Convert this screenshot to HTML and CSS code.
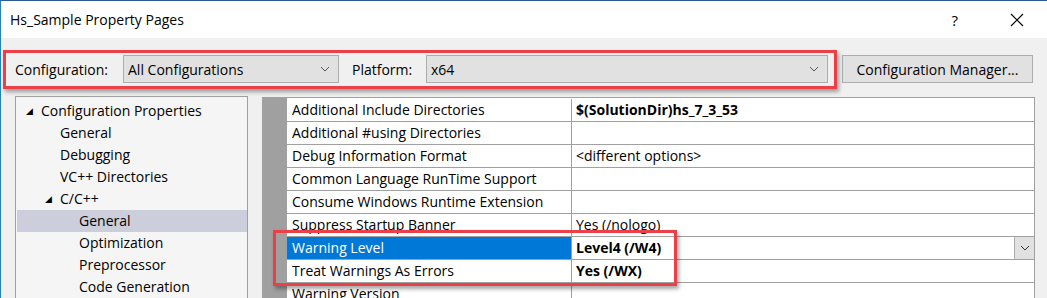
FILE: index.html
```html
<!doctype html>
<html lang="en">
  <head>
    <meta charset="UTF-8" />
    <title>Hs_Sample Property Pages</title>
    <link rel="stylesheet" href="styles.css">
  </head>
  <body>
    <div class="window">
      <!-- Title bar -->
      <div class="titlebar">
        <span class="title">Hs_Sample Property Pages</span>
        <span class="help">?</span>
        <svg class="close" width="14" height="14" viewBox="0 0 14 14">
          <path d="M1 1 L13 13 M13 1 L1 13" stroke="#000" stroke-width="1.2" fill="none" />
        </svg>
      </div>

      <!-- Configuration / Platform row -->
      <div class="toolbar">
        <span class="label config-label">Configuration:</span>
        <div class="combo combo-config">
          <span>All Configurations</span>
          <svg class="chevron" width="10" height="6" viewBox="0 0 10 6">
            <path d="M1 1 L5 5 L9 1" stroke="#555" stroke-width="1" fill="none" />
          </svg>
        </div>
        <span class="label platform-label">Platform:</span>
        <div class="combo combo-platform">
          <span>x64</span>
          <svg class="chevron" width="10" height="6" viewBox="0 0 10 6">
            <path d="M1 1 L5 5 L9 1" stroke="#555" stroke-width="1" fill="none" />
          </svg>
        </div>
        <button class="manager">Configuration Manager...</button>
        <div class="highlight highlight-top"></div>
      </div>

      <div class="main">
        <!-- Property tree -->
        <ul class="tree">
          <li class="lvl0"><span class="arrow">&#9698;</span>Configuration Properties</li>
          <li class="lvl1">General</li>
          <li class="lvl1">Debugging</li>
          <li class="lvl1">VC++ Directories</li>
          <li class="lvl1 open"><span class="arrow">&#9698;</span>C/C++</li>
          <li class="lvl2 selected">General</li>
          <li class="lvl2">Optimization</li>
          <li class="lvl2">Preprocessor</li>
          <li class="lvl2">Code Generation</li>
        </ul>

        <!-- Property grid -->
        <div class="grid-area">
          <div class="gutter"></div>
          <div class="grid">
            <div class="row">
              <div class="name">Additional Include Directories</div>
              <div class="value bold">$(SolutionDir)hs_7_3_53</div>
            </div>
            <div class="row">
              <div class="name">Additional #using Directories</div>
              <div class="value"></div>
            </div>
            <div class="row">
              <div class="name">Debug Information Format</div>
              <div class="value">&lt;different options&gt;</div>
            </div>
            <div class="row">
              <div class="name">Common Language RunTime Support</div>
              <div class="value"></div>
            </div>
            <div class="row">
              <div class="name">Consume Windows Runtime Extension</div>
              <div class="value"></div>
            </div>
            <div class="row">
              <div class="name">Suppress Startup Banner</div>
              <div class="value">Yes (/nologo)</div>
            </div>
            <div class="row active">
              <div class="name">Warning Level</div>
              <div class="value bold">
                <span>Level4 (/W4)</span>
                <span class="drop">
                  <svg width="10" height="6" viewBox="0 0 10 6">
                    <path d="M1 1 L5 5 L9 1" stroke="#333" stroke-width="1" fill="none" />
                  </svg>
                </span>
              </div>
            </div>
            <div class="row">
              <div class="name">Treat Warnings As Errors</div>
              <div class="value bold">Yes (/WX)</div>
            </div>
            <div class="row">
              <div class="name">Warning Version</div>
              <div class="value"></div>
            </div>
          </div>
          <div class="highlight highlight-grid"></div>
        </div>
      </div>
    </div>
  </body>
</html>
```

FILE: styles.css
```css
/* Visual Studio property pages dialog */
body {
  margin: 0;
  width: 1047px;
  height: 298px;
  overflow: hidden;
  font-family: "Segoe UI", "Open Sans", sans-serif;
  font-size: 14px;
  color: #000;
  background-color: #f0f0f0;
}

.window {
  height: 298px;
  border-top: 1px solid #2c5a92;
  border-left: 1px solid #1883d7;
  box-sizing: border-box;
  background-color: #f0f0f0;
}

.titlebar {
  height: 37px;
  background-color: #fff;
  display: flex;
  align-items: center;
  padding-left: 9px;
}

.title {
  flex: 1;
  font-size: 14px;
  padding-bottom: 1px;
}

.help {
  font-size: 15px;
  margin-right: 52px;
}

.close {
  margin-right: 23px;
}

.toolbar {
  position: relative;
  display: flex;
  align-items: center;
  height: 28px;
  margin-top: 17px;
}

.label {
  white-space: nowrap;
}

.config-label {
  margin-left: 14px;
  width: 108px;
}

.platform-label {
  margin-left: 13px;
  width: 74px;
}

.combo {
  height: 28px;
  box-sizing: border-box;
  border: 1px solid #adadad;
  background-color: #e1e1e1;
  display: flex;
  align-items: center;
  justify-content: space-between;
  padding: 0 8px 0 4px;
}

.combo-config {
  width: 216px;
}

.combo-platform {
  width: 402px;
}

.manager {
  margin-left: 14px;
  width: 191px;
  height: 28px;
  border: 1px solid #adadad;
  background-color: #e1e1e1;
  font-family: inherit;
  font-size: 14px;
  padding: 0;
}

/* Red annotation boxes drawn over the dialog */
.highlight {
  position: absolute;
  border: 3px solid #ec3f47;
  box-shadow: 2px 3px 4px rgba(0, 0, 0, 0.35);
  pointer-events: none;
}

.highlight-top {
  left: 2px;
  top: -5px;
  width: 828px;
  height: 33px;
}

.highlight-grid {
  left: 11px;
  top: 134px;
  width: 398px;
  height: 50px;
}

.main {
  display: flex;
  margin-top: 13px;
}

.tree {
  list-style: none;
  margin: 0 0 0 14px;
  padding: 3px 0 0 1px;
  width: 230px;
  height: 220px;
  background-color: #f5f5f5;
  border: 1px solid #a0a0a0;
  border-bottom: none;
}

.tree li {
  height: 22px;
  line-height: 22px;
  white-space: nowrap;
  position: relative;
}

.arrow {
  position: absolute;
  font-size: 9px;
}

.lvl0 {
  padding-left: 24px;
}

.lvl0 .arrow {
  left: 9px;
}

.lvl1 {
  padding-left: 43px;
}

.lvl1.open .arrow {
  left: 28px;
}

.lvl2 {
  padding-left: 62px;
}

.selected {
  background-color: #cccedb;
}

.grid-area {
  position: relative;
  display: flex;
  margin-left: 14px;
  padding-top: 1px;
}

.gutter {
  width: 25px;
  background-color: #a0a0a0;
}

.grid {
  width: 747px;
  background-color: #fff;
  border-top: 1px solid #a0a0a0;
  border-right: 1px solid #a0a0a0;
  padding-top: 1px;
}

.row {
  display: flex;
  height: 23px;
  border-bottom: 1px solid #a0a0a0;
  box-sizing: border-box;
}

.name {
  width: 285px;
  padding-left: 5px;
  border-right: 1px solid #a0a0a0;
  box-sizing: border-box;
  line-height: 22px;
  white-space: nowrap;
}

.value {
  flex: 1;
  padding-left: 4px;
  line-height: 22px;
  display: flex;
  justify-content: space-between;
  white-space: nowrap;
}

.bold {
  font-weight: bold;
}

.active .name {
  background-color: #0078d7;
  color: #fff;
}

.drop {
  width: 20px;
  height: 22px;
  box-sizing: border-box;
  border-left: 1px solid #adadad;
  background-color: #e1e1e1;
  display: flex;
  align-items: center;
  justify-content: center;
}
```
